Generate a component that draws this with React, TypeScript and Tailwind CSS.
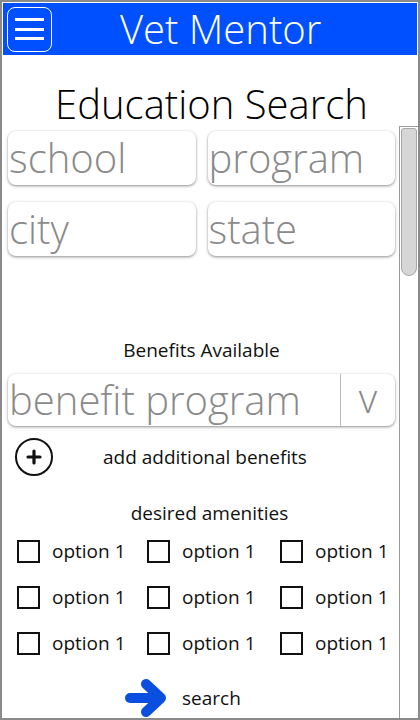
import React from 'react';

const fields = ['school', 'program', 'city', 'state'];

function Field({label}: {label: string}) {
    return (
        <div className="flex h-[54px] items-center rounded-[8px] bg-white pl-[1px] text-[40px] font-light leading-none text-[#8a8a8a] shadow-[0_1px_3px_rgba(0,0,0,0.45)]">
            {label}
        </div>
    );
}

function Option() {
    return (
        <div className="flex h-[23px] items-center gap-[12px]">
            <div className="h-[23px] w-[23px] border-2 border-[#111]" />
            <span className="text-[19px] leading-none text-[#111]">option 1</span>
        </div>
    );
}

export default function App() {
    return (
        <div className="flex h-[720px] w-[420px] flex-col overflow-hidden border-2 border-[#8a8a8a] bg-white font-['Open_Sans',sans-serif]">
            <header className="mx-px mt-px flex h-[52px] shrink-0 items-center bg-[#0050ff] px-[4px]">
                <button className="flex h-[45px] w-[45px] flex-col items-center justify-center gap-[6.5px] rounded-[8px] border border-white">
                    <span className="h-[3px] w-[29px] bg-white" />
                    <span className="h-[3px] w-[29px] bg-white" />
                    <span className="h-[3px] w-[29px] bg-white" />
                </button>
                <h1 className="ml-[68px] text-[40px] font-light leading-none text-white">Vet Mentor</h1>
            </header>

            <div className="flex min-h-0 flex-1">
                <main className="flex flex-1 flex-col pl-[6px] pr-[4px]">
                    <h2 className="mt-[29px] h-[40px] pl-[20px] text-center text-[40px] font-light leading-none text-black">Education Search</h2>

                    <div className="mt-[7px] grid grid-cols-2 gap-x-[12px] gap-y-[17px]">
                        {fields.map(f => (
                            <Field key={f} label={f} />
                        ))}
                    </div>

                    <p className="mt-[85px] h-[19px] text-center text-[19px] leading-none text-[#111]">Benefits Available</p>

                    <div className="mt-[14px] flex h-[52px] shrink-0 items-center rounded-[8px] bg-white text-[40px] font-light leading-none text-[#8a8a8a] shadow-[0_1px_3px_rgba(0,0,0,0.45)]">
                        <span className="flex-1 pl-[1px]">benefit program</span>
                        <span className="flex h-full w-[55px] items-center justify-center border-l border-[#bdbdbd] pb-[4px]">v</span>
                    </div>

                    <div className="mt-[12px] flex items-center">
                        <div className="ml-[7px] flex h-[38px] w-[38px] items-center justify-center rounded-full border-2 border-[#111]">
                            <svg width="16" height="16" viewBox="0 0 16 16">
                                <path d="M8 2v12M2 8h12" stroke="#111" strokeWidth="3.2" strokeLinecap="round" />
                            </svg>
                        </div>
                        <span className="ml-[50px] text-[19px] leading-none text-[#111]">add additional benefits</span>
                    </div>

                    <p className="mt-[28px] h-[19px] pl-[16px] text-center text-[19px] leading-none text-[#111]">desired amenities</p>

                    <div className="mt-[17px] grid grid-cols-[130px_133px_1fr] gap-y-[23px] pl-[9px]">
                        {Array.from({length: 9}).map((_, i) => (
                            <Option key={i} />
                        ))}
                    </div>

                    <div className="ml-[116px] mt-[24px] flex items-center gap-[14px]">
                        <svg width="44" height="38" viewBox="0 0 44 38">
                            <path d="M6 19h30M22 5l15 14-15 14" fill="none" stroke="#0a4fe0" strokeWidth="10" strokeLinecap="round" strokeLinejoin="round" />
                        </svg>
                        <span className="text-[19px] leading-none text-[#111]">search</span>
                    </div>
                </main>

                <div className="mt-[71px] flex w-[19px] shrink-0 justify-center border-l border-t border-[#9a9a9a] bg-white pt-[1px]">
                    <div className="h-[148px] w-[16px] rounded-b-[8px] rounded-t-[3px] border border-[#a8a8a8] bg-[#d6d6d6]" />
                </div>
            </div>
        </div>
    );
}
